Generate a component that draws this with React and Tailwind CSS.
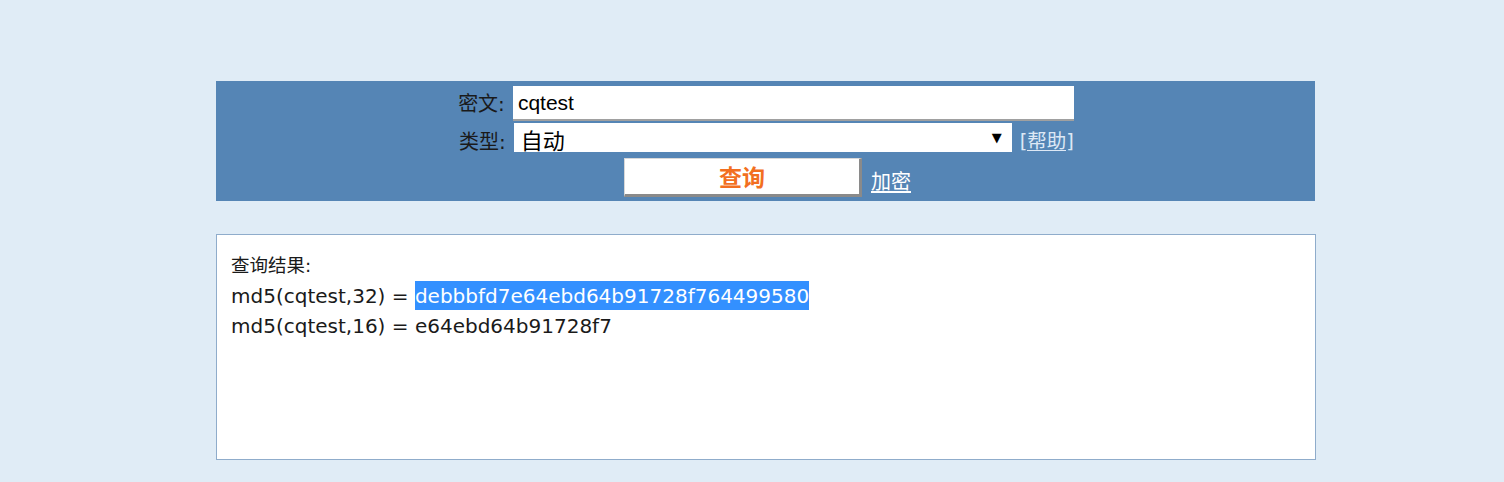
import React from 'react';

const cjk = { fontFamily: '"DejaVu Sans", "Noto Sans CJK SC", sans-serif' };
const arial = { fontFamily: '"Liberation Sans", "Noto Sans CJK SC", sans-serif' };

const App = () => {
    return (
        <div className="w-full h-[482px] bg-[#e0ecf6] pt-[81px]" style={cjk}>
            <div className="ml-[216px] w-[1099px] bg-[#5585b5] pt-[5px] pb-[4px] flex flex-col items-center">
                <div className="flex items-center h-[35px] ml-[1px]">
                    <span className="text-[20px] text-[#1a1a1a] mr-[8px]">密文:</span>
                    <div className="w-[561px] h-[35px] bg-white border-b-2 border-[#a0a0a0] flex items-center pl-[5px] text-[21px] text-black" style={arial}>cqtest</div>
                </div>
                <div className="flex items-center h-[29px] mt-[2px] ml-[2px]">
                    <span className="text-[20px] text-[#1a1a1a] mr-[8px] mt-[8px]">类型:</span>
                    <div className="w-[498px] h-[29px] bg-white flex items-center justify-between pl-[7px] pr-[10px] overflow-hidden">
                        <span className="text-[22px] text-black leading-none mt-[8px]" style={arial}>自动</span>
                        <span className="text-[13px] text-black">▼</span>
                    </div>
                    <a className="ml-[8px] mt-[8px] text-[19.5px] text-[#dde8f5] underline underline-offset-2">[帮助]</a>
                </div>
                <div className="flex items-center h-[39px] mt-[6px] ml-[4px]">
                    <div className="w-[238px] h-[39px] bg-white border-t border-l border-[#d8d8d8] border-b-[3px] border-r-[3px] border-b-[#8a8a8a] border-r-[#8a8a8a] flex items-center justify-center text-[23px] font-bold text-[#f26f21] pt-[4px]">查询</div>
                    <a className="ml-[9px] mt-[8px] text-[20px] text-white underline underline-offset-2">加密</a>
                </div>
            </div>
            <div className="ml-[216px] mt-[33px] w-[1100px] h-[226px] bg-white border border-[#8faccb] px-[14px] pt-[16px]">
                <div className="text-[18.5px] text-[#1a1a1a] leading-[30px]">查询结果:</div>
                <div className="text-[20px] text-[#1a1a1a] leading-[30px]">
                    md5(cqtest,32) = <span className="bg-[#3390ff] text-white pt-[3px] pb-[2px]">debbbfd7e64ebd64b91728f764499580</span>
                </div>
                <div className="text-[20px] text-[#1a1a1a] leading-[30px]">md5(cqtest,16) = e64ebd64b91728f7</div>
            </div>
        </div>
    );
};

export default App;
